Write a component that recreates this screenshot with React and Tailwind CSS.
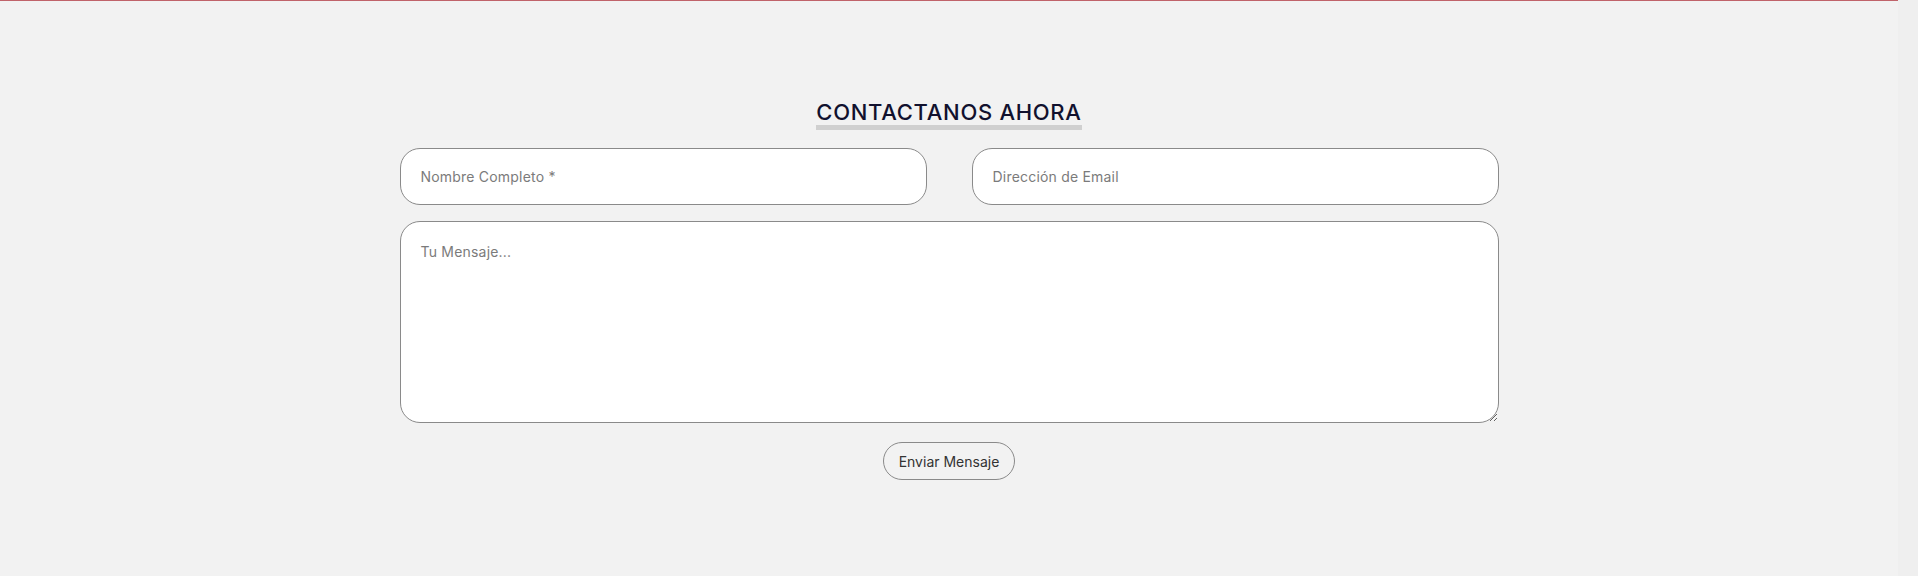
import React from "react";

export default function App() {
  const font = { fontFamily: "Inter, 'Open Sans', sans-serif" };
  return (
    <div className="flex h-[576px] w-full bg-[#f2f2f2]" style={font}>
      <div className="flex flex-1 flex-col border-t border-[#c0636a]">
        <div className="mx-auto mt-[99px] flex w-[1099px] flex-col items-center">
          <h2 className="border-b-[5px] border-[#d0d0d0] text-[22px] font-medium leading-[25px] tracking-[0.7px] text-[#11112e]">
            CONTACTANOS AHORA
          </h2>
          <div className="mt-[18px] grid w-full grid-cols-2 gap-[45px]">
            <input
              className="h-[57px] rounded-[20px] border border-[#8a8a8a] bg-white px-5 text-[14px] tracking-[0.2px] text-[#333] outline-none placeholder:text-[#7b7b7b]"
              placeholder="Nombre Completo *"
            />
            <input
              className="h-[57px] rounded-[20px] border border-[#8a8a8a] bg-white px-5 text-[14px] tracking-[0.2px] text-[#333] outline-none placeholder:text-[#7b7b7b]"
              placeholder="Dirección de Email"
            />
          </div>
          <textarea
            className="mt-[16px] h-[202px] w-full rounded-[20px] border border-[#8a8a8a] bg-white px-5 pt-[19px] text-[14px] tracking-[0.2px] text-[#333] outline-none placeholder:text-[#7b7b7b]"
            placeholder="Tu Mensaje..."
          />
          <button className="mt-[19px] h-[38px] w-[132px] rounded-[19px] border border-[#8a8a8a] bg-[#f2f2f2] text-[14px] text-[#333]">
            Enviar Mensaje
          </button>
        </div>
      </div>
      <div className="w-[20px] bg-[#efefef]" />
    </div>
  );
}
